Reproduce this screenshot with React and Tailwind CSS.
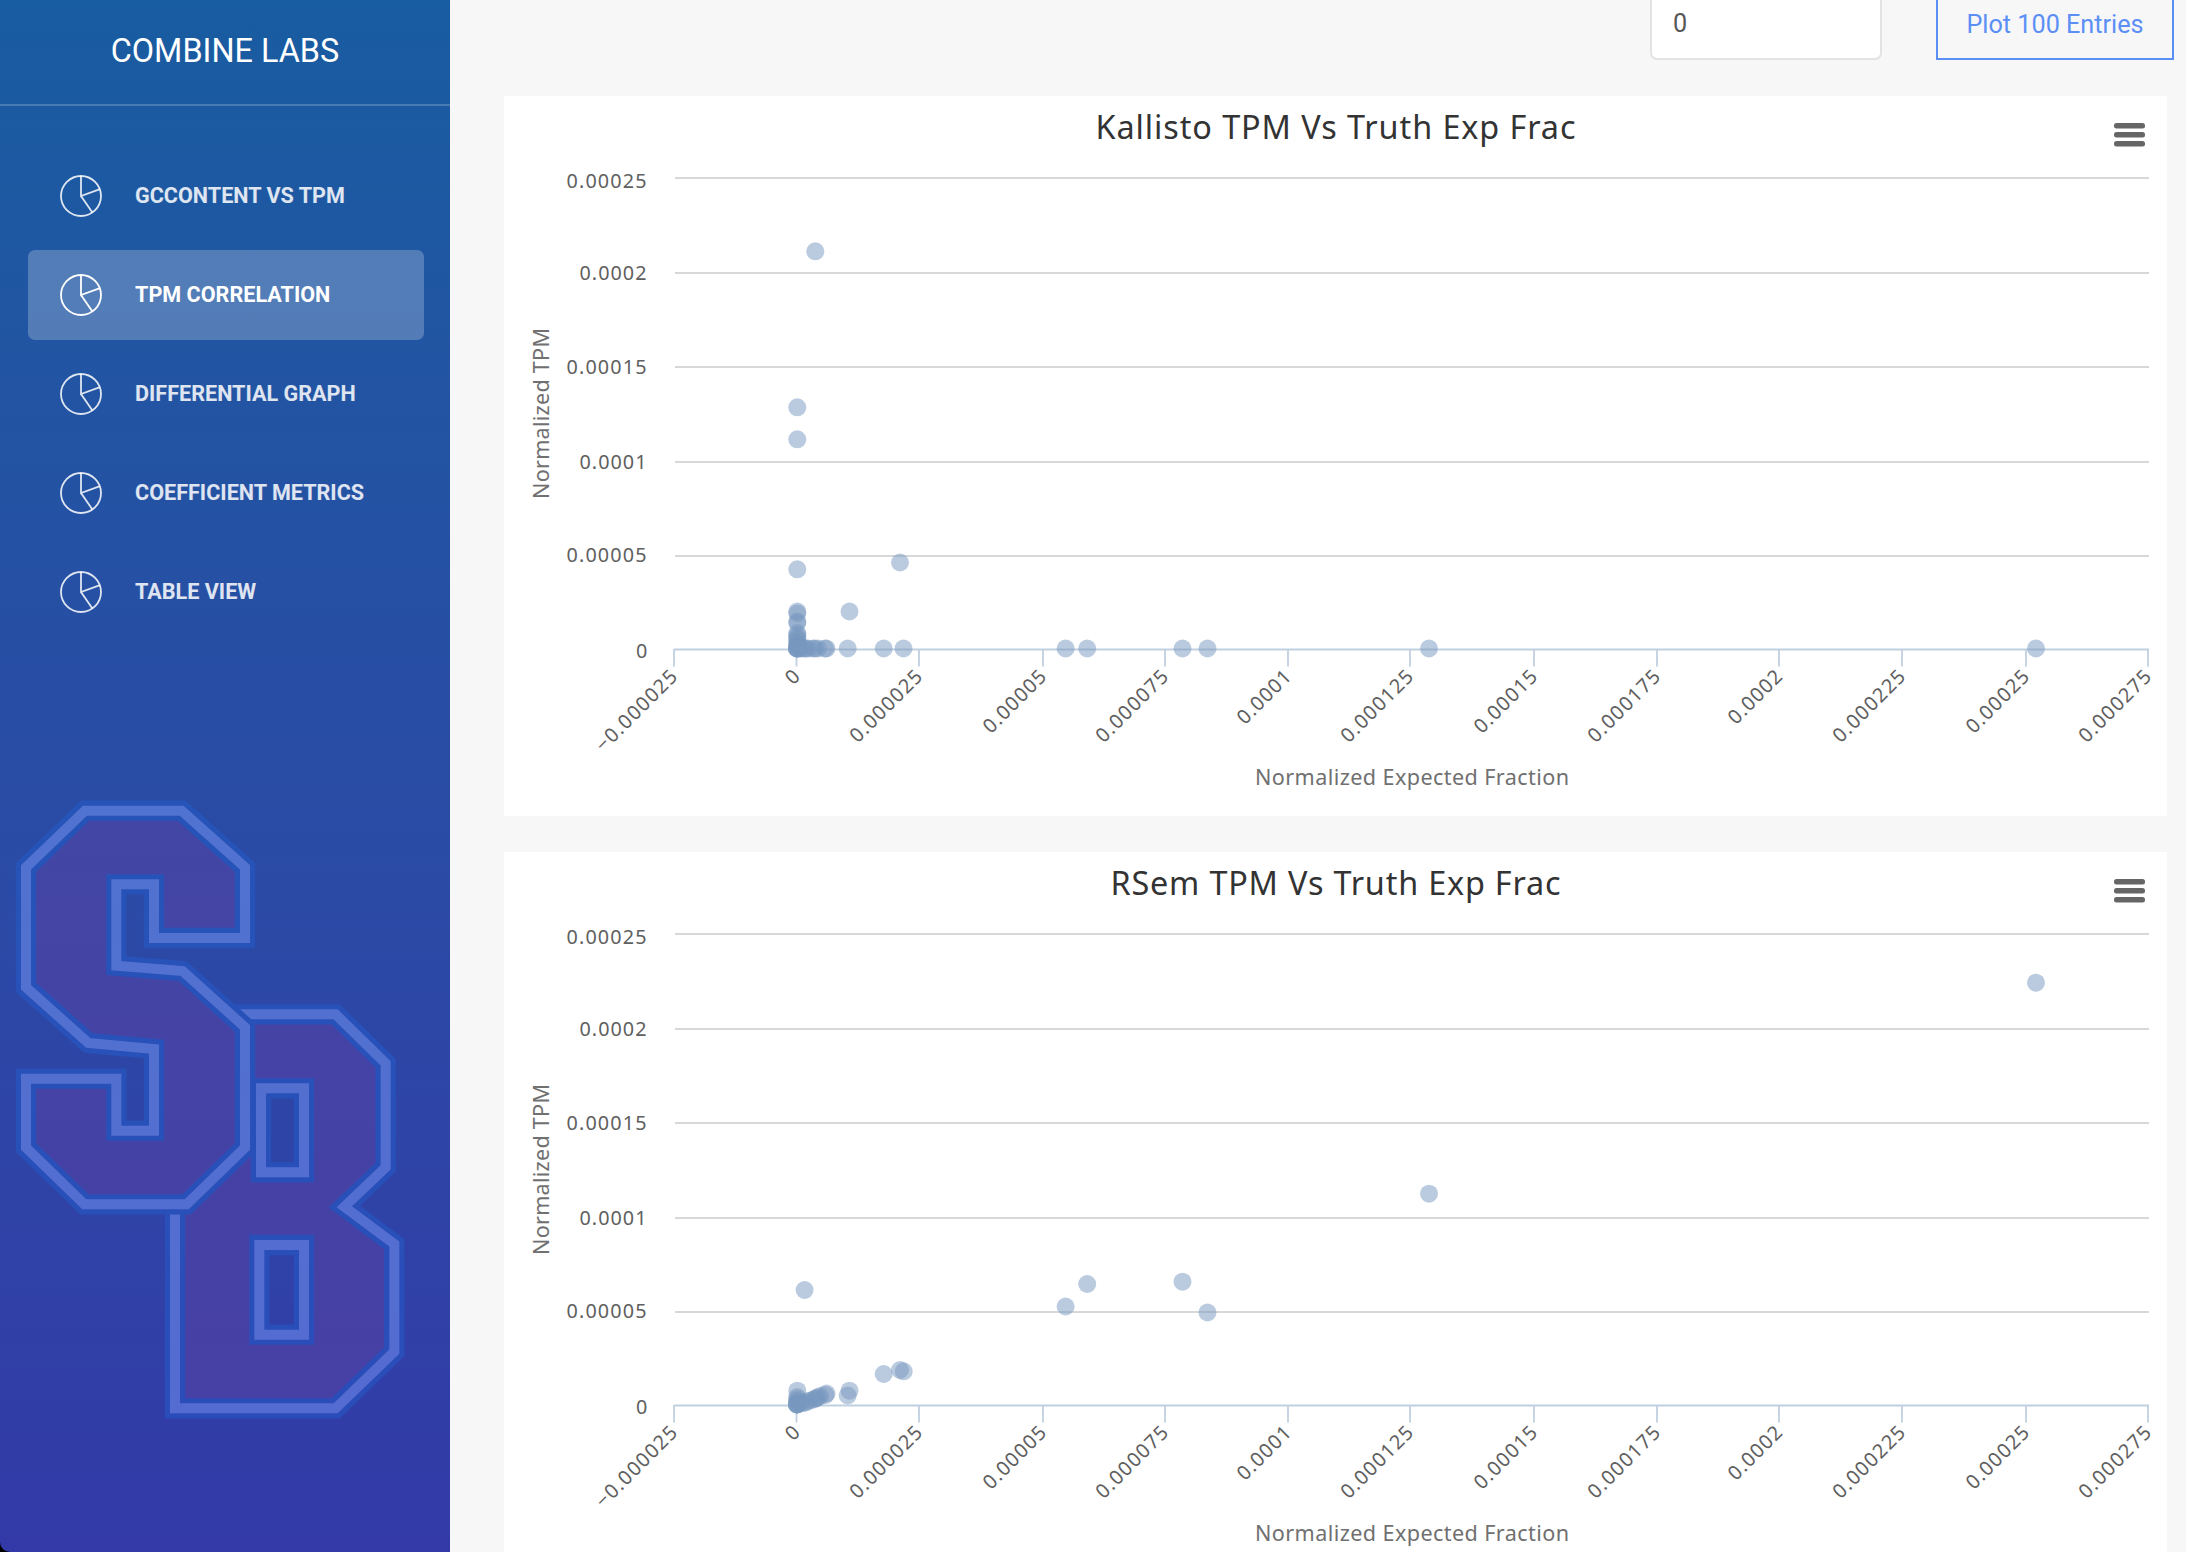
import React from "react";

const NAV = ["GCCONTENT VS TPM", "TPM CORRELATION", "DIFFERENTIAL GRAPH", "COEFFICIENT METRICS", "TABLE VIEW"];

const Y_TICKS = [
  ["0.00025", 178, 80], ["0.0002", 273, 67], ["0.00015", 367, 80],
  ["0.0001", 462, 67], ["0.00005", 556, 80], ["0", 650, 10.5],
];

const X_TICKS = [
  ["−0.000025", 674, 106], ["0", 796.5, 11], ["0.000025", 919, 93], ["0.00005", 1043, 80],
  ["0.000075", 1165, 93], ["0.0001", 1288, 67], ["0.000125", 1410, 93], ["0.00015", 1534, 80],
  ["0.000175", 1657, 93], ["0.0002", 1779, 67], ["0.000225", 1902, 93], ["0.00025", 2026, 80],
  ["0.000275", 2148, 93],
];

const KALLISTO = [
  [815.3, 251.3], [797.3, 407.3], [797.3, 439.3], [797.3, 569.3], [900, 562.5], [849.5, 611.5],
  [797.3, 611.5], [797.3, 613.5], [797.3, 621.5], [797.3, 623], [797.3, 633], [797.3, 635], [797.3, 637], [797.3, 639],
  [797.3, 641], [797.3, 643], [797.3, 645], [797.3, 646], [797, 648.5], [797, 648.5], [797, 648.5], [797, 648.5],
  [799, 648.5], [801, 648.5], [804, 648.5], [806, 648.5], [808, 648.5], [813, 648.5], [815, 648.5], [818, 648.5],
  [825, 648.5], [826.5, 648.5], [847.7, 648.5], [883.7, 648.5], [903.5, 648.5], [1065.6, 648.5],
  [1087.2, 648.5], [1182.5, 648.5], [1207.5, 648.5], [1429, 648.5], [2036, 648.5],
];

const RSEM = [
  [2036, 226.7], [1429, 437.7], [1065.6, 550.5], [1087.2, 528], [1182.5, 525.7], [1207.5, 556.5],
  [804.6, 534], [883.7, 618], [900, 614], [903.7, 615.3], [849.5, 634.7], [847.7, 639.5], [826.5, 637.5],
  [825.5, 639], [820, 640], [797.3, 634.7], [797.3, 641], [797.3, 643], [797.3, 645], [797, 647], [797, 648.5],
  [797, 648.5], [797, 648.5], [797, 648.5], [800, 647.5], [803, 647], [806, 646.5], [808, 645], [812, 644],
  [815, 643], [816, 642], [818, 641.5],
];

function PieIcon() {
  return (
    <svg viewBox="0 0 44 44" className="-mt-px h-11 w-11 shrink-0" fill="none" stroke="currentColor" strokeWidth="1.8">
      <circle cx="22" cy="22" r="20" />
      <path d="M22 2V22L41 15.2M22 22L33.4 38.4" />
    </svg>
  );
}

function Logo() {
  const s = "M255 92H545L735 262V474H462V313H349V557L548 573L735 742V1103L560 1273H253L78 1103V896H349V1052H462V807L265 789L78 622V262Z";
  const b = "M525 703H1007L1157 850V1162L1033 1280L1183 1392V1715L1007 1885H525ZM783 925V1177H912V925ZM778 1395V1664H912V1395Z";
  return (
    <svg viewBox="0 0 1350 1950" className="mt-[143px] h-[650px] w-[450px] shrink-0 opacity-50" fillRule="evenodd">
      {[b, s].map((d) => (
        <g key={d}>
          <path d={d} fill="#5d42a5" stroke="#245ccc" strokeWidth="61" />
          <path d={d} fill="none" stroke="#789afb" strokeWidth="30" />
        </g>
      ))}
    </svg>
  );
}

function Chart({ title, titleX, titleWidth, points }) {
  return (
    <section className="h-[720px] w-[1663px] shrink-0 bg-white">
      <svg viewBox="504 96 1663 720" className="h-full w-full font-['Noto_Sans','Open_Sans',sans-serif]">
        <text x={titleX} y="139.3" fontSize="32.4" fill="#333333" textLength={titleWidth}>{title}</text>
        <g fill="#666666">
          <rect x="2114" y="123" width="31" height="5.6" rx="2.5" />
          <rect x="2114" y="132" width="31" height="5.6" rx="2.5" />
          <rect x="2114" y="141" width="31" height="5.6" rx="2.5" />
        </g>
        {Y_TICKS.map(([label, y, w], i) => (
          <g key={label}>
            <text x={646.5 - w} y={y + (i === 5 ? 8 : i === 0 ? 9.5 : i === 4 ? 6 : 7.2)} fontSize="19.8" fill="#606060" textLength={w}>{label}</text>
            {i < 5 && <path d={`M675 ${y}H2149`} stroke="#d8d8d8" strokeWidth="1.8" />}
          </g>
        ))}
        <path d="M674 649.5H2149" stroke="#c0d0e0" strokeWidth="2" />
        {X_TICKS.map(([label, x, w]) => (
          <g key={label}>
            <path d={`M${x} 649V666.5`} stroke="#c0d0e0" strokeWidth="1.8" />
            <text transform={`translate(${x + 4.5} 678) rotate(-45)`} x={-w} fontSize="19.8" fill="#606060" textLength={w}>{label}</text>
          </g>
        ))}
        <text transform="translate(548.5 499) rotate(-90)" fontSize="21.6" fill="#707070" textLength="171">Normalized TPM</text>
        <text x="1255" y="785" fontSize="21.6" fill="#707070" textLength="314">Normalized Expected Fraction</text>
        {points.map(([x, y], i) => (
          <circle key={i} cx={x} cy={y} r="9" fill="#7798bf" fillOpacity="0.5" />
        ))}
      </svg>
    </section>
  );
}

export default function App() {
  return (
    <div className="flex h-[1552px] w-[2186px] overflow-hidden bg-black font-[Roboto,sans-serif]">
      <aside className="flex w-[450px] shrink-0 flex-col rounded-bl-[10px] bg-linear-to-b from-[#185ca1] to-[#333aa8]">
        <div className="flex h-[106px] shrink-0 items-center justify-center border-b-2 border-white/20 pb-0.5 text-[32.4px] text-white">
          COMBINE LABS
        </div>
        <nav className="mt-[45px] flex shrink-0 flex-col gap-[9px] pr-[26px] pl-7">
          {NAV.map((label, i) => (
            <a
              key={label}
              className={
                "flex h-[90px] items-center gap-8 rounded-[7px] pl-[31px] text-[21.6px] font-bold " +
                (i === 1 ? "bg-white/[0.23] text-white" : "pt-px text-white/85")
              }
            >
              <PieIcon />
              <span>{label}</span>
            </a>
          ))}
        </nav>
        <Logo />
      </aside>
      <main className="flex min-w-0 flex-1 flex-col bg-[#f7f7f7] pl-[54px]">
        <div className="flex h-[60px] shrink-0 items-end justify-end pr-3 text-[25.2px]">
          <div className="mr-[54px] -mt-3 flex h-[72px] w-[232px] shrink-0 items-center rounded-[7px] border-2 border-[#e3e3e3] bg-white pt-2 pb-2 pl-[21px] text-[#565656]">
            0
          </div>
          <button className="flex h-[72px] w-[238px] shrink-0 items-center justify-center border-2 border-[#5b8ff6] pt-px text-[#5b8ff6]">
            Plot 100 Entries
          </button>
        </div>
        <div className="mt-9 flex flex-col gap-9">
          <Chart title="Kallisto TPM Vs Truth Exp Frac" titleX={1095.5} titleWidth={480} points={KALLISTO} />
          <Chart title="RSem TPM Vs Truth Exp Frac" titleX={1110.5} titleWidth={450} points={RSEM} />
        </div>
      </main>
    </div>
  );
}
